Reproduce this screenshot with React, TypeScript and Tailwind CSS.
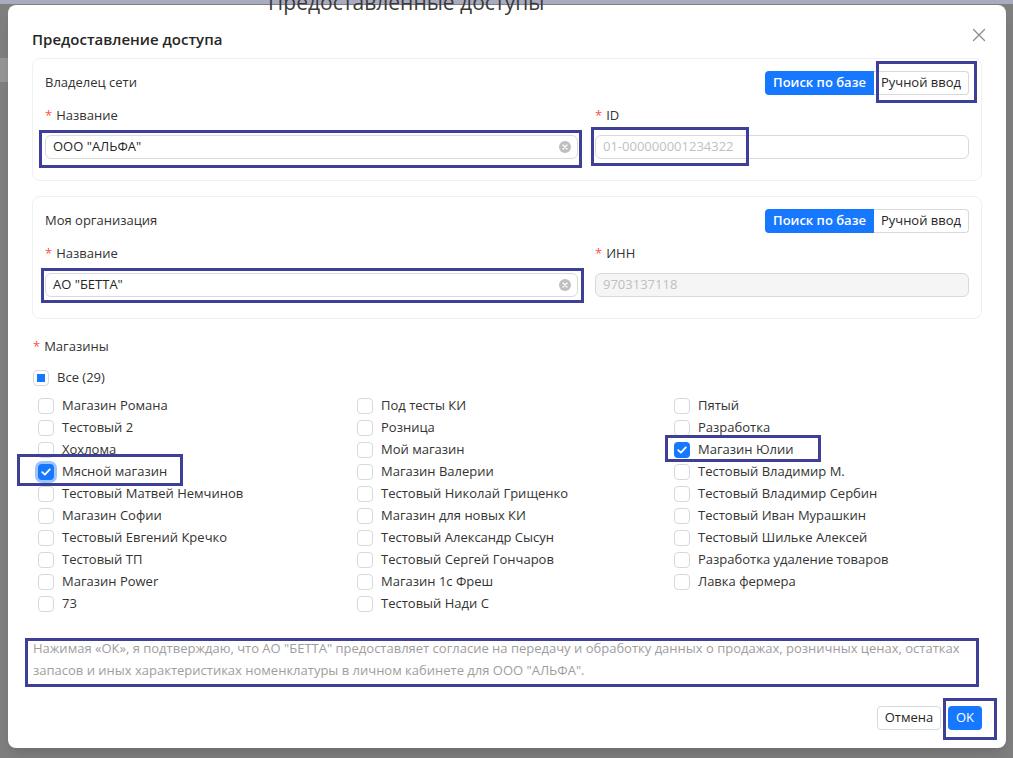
import React from "react";

const col1 = [
  "Магазин Романа",
  "Тестовый 2",
  "Хохлома",
  "Мясной магазин",
  "Тестовый Матвей Немчинов",
  "Магазин Софии",
  "Тестовый Евгений Кречко",
  "Тестовый ТП",
  "Магазин Power",
  "73",
];
const col2 = [
  "Под тесты КИ",
  "Розница",
  "Мой магазин",
  "Магазин Валерии",
  "Тестовый Николай Грищенко",
  "Магазин для новых КИ",
  "Тестовый Александр Сысун",
  "Тестовый Сергей Гончаров",
  "Магазин 1с Фреш",
  "Тестовый Нади С",
];
const col3 = [
  "Пятый",
  "Разработка",
  "Магазин Юлии",
  "Тестовый Владимир М.",
  "Тестовый Владимир Сербин",
  "Тестовый Иван Мурашкин",
  "Тестовый Шильке Алексей",
  "Разработка удаление товаров",
  "Лавка фермера",
];

const checked = new Set(["Мясной магазин", "Магазин Юлии"]);

function Box({ state, focus }: { state: "off" | "on" | "ind"; focus?: boolean }) {
  if (state === "on") {
    return (
      <span
        className={
          focus
            ? "flex h-[16px] w-[16px] shrink-0 items-center justify-center rounded-[4px] bg-[#1677ff] ring-[3px] ring-[#9ec5fb]"
            : "flex h-[16px] w-[16px] shrink-0 items-center justify-center rounded-[4px] bg-[#1677ff]"
        }
      >
        <svg width="10" height="8" viewBox="0 0 10 8">
          <path d="M1.2 4.2 L3.9 6.7 L8.8 1.4" stroke="white" strokeWidth="1.8" fill="none" strokeLinecap="round" strokeLinejoin="round" />
        </svg>
      </span>
    );
  }
  if (state === "ind") {
    return (
      <span className="flex h-[16px] w-[16px] shrink-0 items-center justify-center rounded-[4px] border border-[#d9d9d9] bg-white">
        <span className="h-[8px] w-[8px] bg-[#1677ff]" />
      </span>
    );
  }
  return <span className="h-[16px] w-[16px] shrink-0 rounded-[4px] border border-[#d9d9d9] bg-white" />;
}

function Item({ label }: { label: string }) {
  const on = checked.has(label);
  return (
    <div className="flex h-[22px] items-center gap-[8px] text-[13px] text-[#333]">
      <Box state={on ? "on" : "off"} focus={label === "Мясной магазин"} />
      <span className="whitespace-nowrap">{label}</span>
    </div>
  );
}

function ClearIcon() {
  return (
    <svg width="12" height="12" viewBox="0 0 12 12">
      <circle cx="6" cy="6" r="6" fill="#bfbfbf" />
      <path d="M4 4 L8 8 M8 4 L4 8" stroke="white" strokeWidth="1.3" strokeLinecap="round" />
    </svg>
  );
}

function Label({ text }: { text: string }) {
  return (
    <div className="flex h-[22px] items-center text-[13px] text-[#333]">
      <span className="mr-[4px] text-[#ff4d4f]">*</span>
      <span>{text}</span>
    </div>
  );
}

function Segmented() {
  return (
    <div className="flex h-[24px] text-[13px]">
      <div className="flex w-[109px] items-center justify-center rounded-l-[4px] bg-[#1677ff] font-semibold text-white">
        Поиск по базе
      </div>
      <div className="flex w-[95px] items-center justify-center rounded-r-[4px] border border-l-0 border-[#d9d9d9] bg-white text-[#262626]">
        Ручной ввод
      </div>
    </div>
  );
}

function Card({
  title,
  name,
  rightLabel,
  rightValue,
  rightDisabled,
}: {
  title: string;
  name: string;
  rightLabel: string;
  rightValue: string;
  rightDisabled?: boolean;
}) {
  return (
    <div className="rounded-[8px] border border-[#f0f0f0] px-[12px] pb-[21px] pt-[12px]">
      <div className="flex h-[24px] items-center justify-between">
        <span className="text-[13px] text-[#333]">{title}</span>
        <Segmented />
      </div>
      <div className="mt-[10px] grid grid-cols-[533px_1fr] gap-x-[17px]">
        <div>
          <Label text="Название" />
          <div className="mt-[8px] flex h-[24px] items-center justify-between rounded-[6px] border border-[#d9d9d9] bg-white pl-[7px] pr-[6px] text-[13px] text-[#262626]">
            <span>{name}</span>
            <ClearIcon />
          </div>
        </div>
        <div>
          <Label text={rightLabel} />
          <div
            className={
              rightDisabled
                ? "mt-[8px] flex h-[24px] items-center rounded-[6px] border border-[#d9d9d9] bg-[#f5f5f5] px-[7px] text-[13px] text-[#bfbfbf]"
                : "mt-[8px] flex h-[24px] items-center rounded-[6px] border border-[#d9d9d9] bg-white px-[7px] text-[13px] text-[#bfbfbf]"
            }
          >
            {rightValue}
          </div>
        </div>
      </div>
    </div>
  );
}

const annot = "absolute border-[3px] border-[#3d3f99]";

export default function App() {
  return (
    <div className="relative h-[758px] w-[1013px] overflow-hidden bg-[#7f7f7f] font-['Open_Sans',sans-serif]">
      <div className="absolute left-0 top-0 h-[4px] w-full bg-[#a9abc1]" />
      <div className="absolute left-0 top-[58px] h-[24px] w-[8px] bg-[#969696]" />

      <div className="relative ml-[8px] mt-[5px] h-[743px] w-[998px] rounded-[8px] bg-white px-[24px] pt-[23px] shadow-lg">
        <div className="h-[22px] text-[15px] font-semibold leading-[22px] text-[#262626]">Предоставление доступа</div>
        <svg className="absolute right-[20px] top-[23px]" width="14" height="14" viewBox="0 0 14 14">
          <path d="M1.5 1.5 L12.5 12.5 M12.5 1.5 L1.5 12.5" stroke="#8c8c8c" strokeWidth="1.3" strokeLinecap="round" />
        </svg>

        <div className="mt-[8px]">
          <Card title="Владелец сети" name={'ООО "АЛЬФА"'} rightLabel="ID" rightValue="01-000000001234322" />
        </div>
        <div className="mt-[15px]">
          <Card title="Моя организация" name={'АО "БЕТТА"'} rightLabel="ИНН" rightValue="9703137118" rightDisabled />
        </div>

        <div className="mt-[17px] flex h-[22px] items-center pl-[1px] text-[13px] text-[#333]">
          <span className="mr-[4px] text-[#ff4d4f]">*</span>
          <span>Магазины</span>
        </div>
        <div className="mt-[9px] flex h-[22px] items-center gap-[8px] pl-[1px] text-[13px] text-[#333]">
          <Box state="ind" />
          <span>Все (29)</span>
        </div>

        <div className="mt-[6px] grid grid-cols-[319px_317px_1fr] pl-[6px]">
          <div className="flex flex-col">
            {col1.map((l) => (
              <Item key={l} label={l} />
            ))}
          </div>
          <div className="flex flex-col">
            {col2.map((l) => (
              <Item key={l} label={l} />
            ))}
          </div>
          <div className="flex flex-col">
            {col3.map((l) => (
              <Item key={l} label={l} />
            ))}
          </div>
        </div>

        <p className="mt-[22px] pl-[1px] text-[13px] leading-[22px] text-[#9e9e9e]">
          Нажимая «ОК», я подтверждаю, что АО "БЕТТА" предоставляет согласие на передачу и обработку данных о продажах, розничных ценах, остатках запасов и иных характеристиках номенклатуры в личном кабинете для ООО "АЛЬФА".
        </p>

        <div className="mt-[25px] flex justify-end gap-[7px]">
          <button className="flex h-[24px] w-[64px] items-center justify-center rounded-[4px] border border-[#d9d9d9] bg-white text-[13px] text-[#262626]">
            Отмена
          </button>
          <button className="flex h-[24px] w-[34px] items-center justify-center rounded-[4px] bg-[#1677ff] text-[13px] text-white">
            OK
          </button>
        </div>
      </div>

      <div className="absolute left-[268px] top-[-8px] whitespace-nowrap text-[21px] leading-none text-[#3a3a3a]">
        Предоставленные доступы
      </div>

      <div className={`${annot} left-[39px] top-[130px] h-[38px] w-[543px]`} />
      <div className={`${annot} left-[591px] top-[127px] h-[39px] w-[158px]`} />
      <div className={`${annot} left-[876px] top-[61px] h-[42px] w-[101px]`} />
      <div className={`${annot} left-[41px] top-[268px] h-[35px] w-[543px]`} />
      <div className={`${annot} left-[17px] top-[454px] h-[32px] w-[166px]`} />
      <div className={`${annot} left-[665px] top-[435px] h-[27px] w-[156px]`} />
      <div className={`${annot} left-[25px] top-[638px] h-[49px] w-[954px]`} />
      <div className={`${annot} left-[943px] top-[698px] h-[42px] w-[54px]`} />
    </div>
  );
}
